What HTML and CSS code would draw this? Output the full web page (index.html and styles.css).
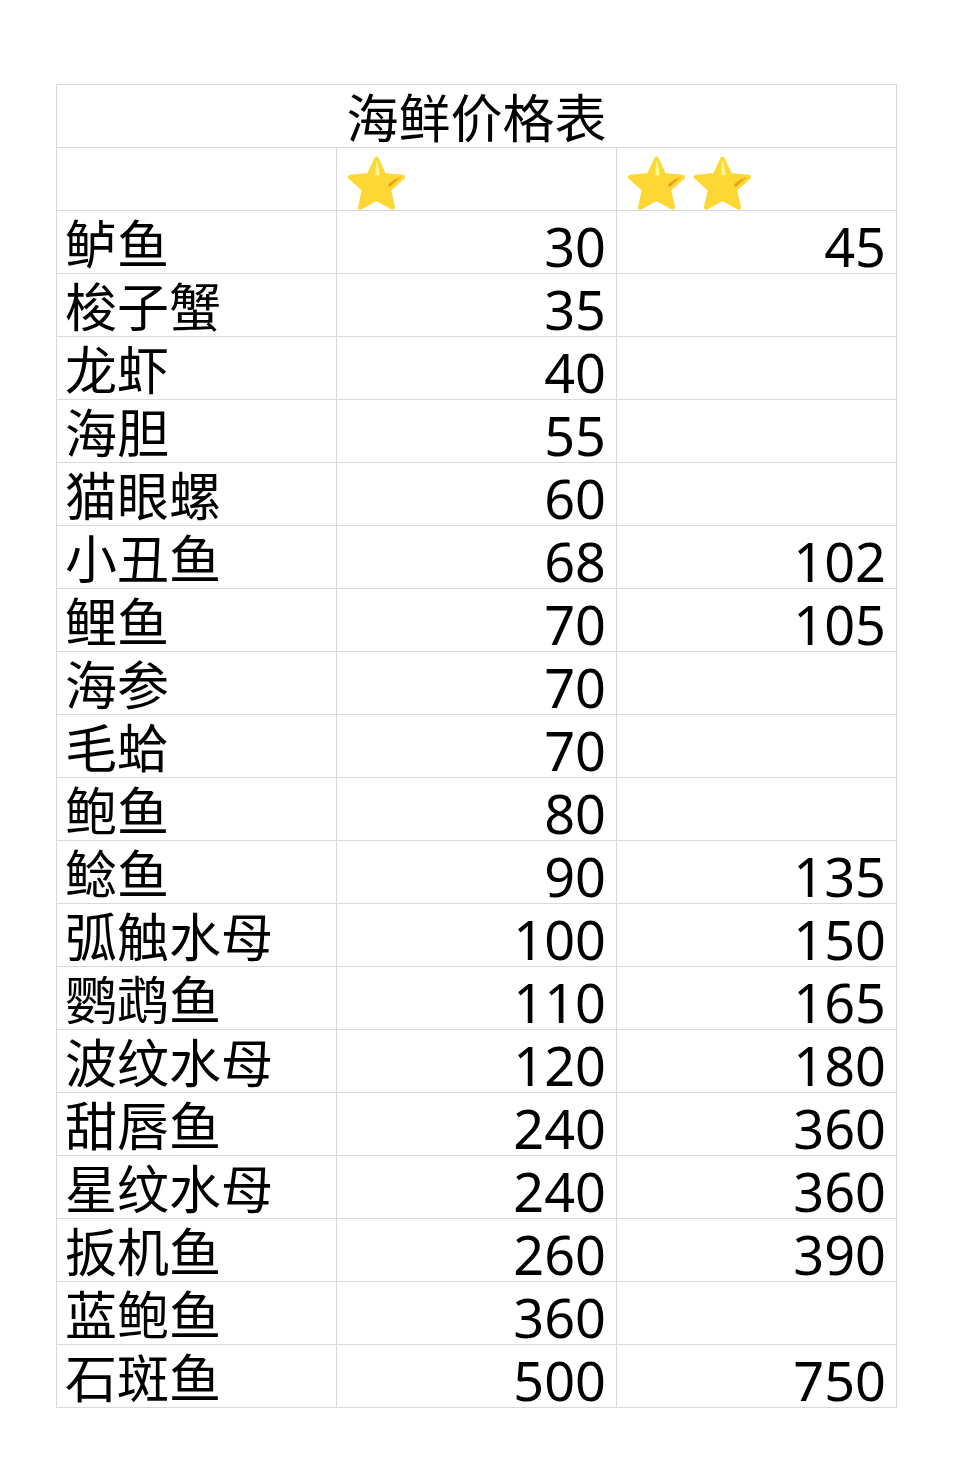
FILE: index.html
```html
<!DOCTYPE html>
<html lang="zh-CN">
<head>
<meta charset="utf-8">
<title>海鲜价格表</title>
<link rel="stylesheet" href="styles.css">
</head>
<body>
<div class="page">
<table class="price">
  <colgroup><col class="c1"><col class="c2"><col class="c3"></colgroup>
  <tr><td class="title" colspan="3">海鲜价格表</td></tr>
  <tr class="stars">
    <td></td>
    <td><span class="starset"><svg class="star" viewBox="0 0 64 60"><use href="#st"/></svg></span></td>
    <td><span class="starset"><svg class="star" viewBox="0 0 64 60"><use href="#st"/></svg><svg class="star" viewBox="0 0 64 60"><use href="#st"/></svg></span></td>
  </tr>
  <tr><td>鲈鱼</td><td class="n">30</td><td class="n">45</td></tr>
  <tr><td>梭子蟹</td><td class="n">35</td><td class="n"></td></tr>
  <tr><td>龙虾</td><td class="n">40</td><td class="n"></td></tr>
  <tr><td>海胆</td><td class="n">55</td><td class="n"></td></tr>
  <tr><td>猫眼螺</td><td class="n">60</td><td class="n"></td></tr>
  <tr><td>小丑鱼</td><td class="n">68</td><td class="n">102</td></tr>
  <tr><td>鲤鱼</td><td class="n">70</td><td class="n">105</td></tr>
  <tr><td>海参</td><td class="n">70</td><td class="n"></td></tr>
  <tr><td>毛蛤</td><td class="n">70</td><td class="n"></td></tr>
  <tr><td>鲍鱼</td><td class="n">80</td><td class="n"></td></tr>
  <tr><td>鲶鱼</td><td class="n">90</td><td class="n">135</td></tr>
  <tr><td>弧触水母</td><td class="n">100</td><td class="n">150</td></tr>
  <tr><td>鹦鹉鱼</td><td class="n">110</td><td class="n">165</td></tr>
  <tr><td>波纹水母</td><td class="n">120</td><td class="n">180</td></tr>
  <tr><td>甜唇鱼</td><td class="n">240</td><td class="n">360</td></tr>
  <tr><td>星纹水母</td><td class="n">240</td><td class="n">360</td></tr>
  <tr><td>扳机鱼</td><td class="n">260</td><td class="n">390</td></tr>
  <tr><td>蓝鲍鱼</td><td class="n">360</td><td class="n"></td></tr>
  <tr><td>石斑鱼</td><td class="n">500</td><td class="n">750</td></tr>
</table>
</div>
<svg width="0" height="0" class="defs">
  <defs>
    <g id="st">
      <polygon points="32,5 40.2,22.7 60.5,24.7 45.3,38.3 49.6,57.5 32,48 14.4,57.5 18.7,38.3 3.5,24.7 23.8,22.7" fill="#FDD835" stroke="#FDD835" stroke-width="5" stroke-linejoin="round"/>
      <path d="M32 6 C33.5 10 35 16 35.5 22 C34 23 32.5 23 31 22.5 C31 16 31.3 10 32 6 Z" fill="#FFF59D"/>
      <path d="M59 24.5 C54 26 48.5 28.5 45 32.5 C44.5 34 45 35.5 46.5 35.5 C50 32 55 28 59 24.5 Z" fill="#E8A317"/>
    </g>
  </defs>
</svg>
</body>
</html>
```

FILE: styles.css
```css
html, body {
  margin: 0;
  padding: 0;
  background: #ffffff;
}

.page {
  padding: 84px 0 0 56px;
}

.price {
  border-collapse: collapse;
  table-layout: fixed;
  width: 841px;
  font-family: "Noto Sans CJK SC", "Noto Sans", sans-serif;
  font-size: 52px;
  color: #000000;
}

.c1, .c2, .c3 {
  width: 280px;
}

.price td {
  border: 1px solid #d9d9d9;
  height: 62px;
  padding: 0 10px 0 8px;
  line-height: 62px;
  white-space: nowrap;
  vertical-align: middle;
  box-sizing: border-box;
}

.price td.title {
  text-align: center;
  padding: 0;
}

.price td.n {
  text-align: right;
  font-family: "Noto Sans", "Noto Sans CJK SC", sans-serif;
  font-size: 54px;
  padding: 8px 10px 0 8px;
  line-height: 54px;
}

.stars td {
  vertical-align: bottom;
}

.starset {
  display: flex;
  gap: 7px;
  padding-left: 2px;
  height: 62px;
  align-items: flex-end;
}

.star {
  width: 59px;
  height: 56px;
  display: block;
}

.defs {
  position: absolute;
  width: 0;
  height: 0;
}
```
